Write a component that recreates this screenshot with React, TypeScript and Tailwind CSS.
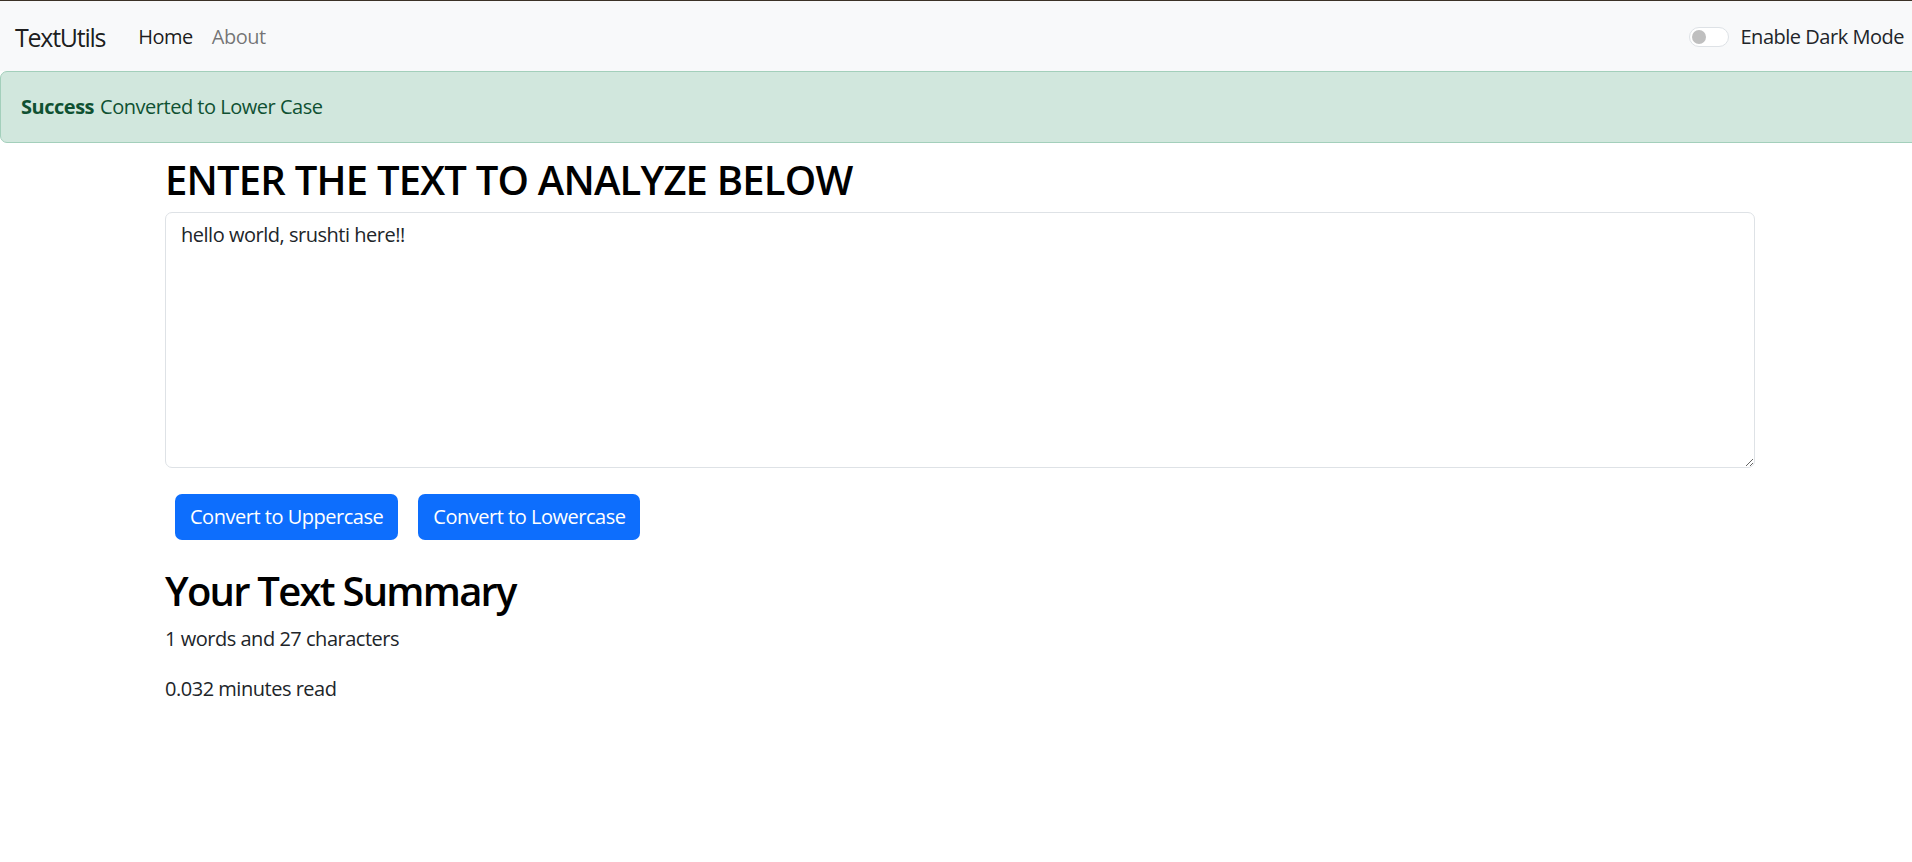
import React, { useState } from "react";

export default function App() {
  const [text, setText] = useState("hello world, srushti here!!");
  const words = 1;
  const chars = text.length;
  return (
    <div
      className="min-h-[862px] w-full overflow-hidden bg-white tracking-[-0.03em] text-[#212529]"
      style={{ fontFamily: '"Open Sans", "Noto Sans", sans-serif' }}
    >
      <div className="h-px w-full bg-[#3b3226]" />
      <nav className="flex h-[70px] items-center bg-[#f8f9fa] pt-[2px] pl-[15px] pr-[8px]">
        <span className="text-[25px] leading-none tracking-[-0.05em] text-black/90">TextUtils</span>
        <div className="ml-[33px] flex items-center gap-[19px] text-[20px]">
          <span className="text-black/90">Home</span>
          <span className="text-black/55">About</span>
        </div>
        <div className="ml-auto flex items-center">
          <div className="relative h-[20px] w-[40px] rounded-full border border-[#dee2e6] bg-white">
            <div className="absolute left-[2px] top-[2px] h-[14px] w-[14px] rounded-full bg-[#bfbfbf]" />
          </div>
          <span className="ml-[11px] text-[20px] text-[#212529]">Enable Dark Mode</span>
        </div>
      </nav>
      <div className="flex h-[72px] w-[1950px] items-center rounded-[7px] border border-[#a3cfbb] bg-[#d1e7dd] px-[20px] text-[20px] text-[#0f5132]">
        <strong className="font-bold">Success</strong>
        <span className="ml-[6px]">Converted to Lower Case</span>
      </div>
      <div className="ml-[165px] w-[1590px]">
        <h1 className="mt-[13px] mb-[8px] text-[40px] font-semibold leading-[48px] tracking-[-0.02em] text-black">
          ENTER THE TEXT TO ANALYZE BELOW
        </h1>
        <textarea
          className="block h-[256px] w-full rounded-[7px] border border-[#dee2e6] px-[15px] py-[7px] text-[20px] leading-[30px] text-[#212529] outline-none"
          value={text}
          onChange={(e) => setText(e.target.value)}
        />
        <div className="mt-[26px] flex gap-[20px] pl-[10px]">
          <button className="h-[46px] rounded-[7px] bg-[#0d6efd] px-[15px] text-[20px] text-white">
            Convert to Uppercase
          </button>
          <button className="h-[46px] rounded-[7px] bg-[#0d6efd] px-[15px] text-[20px] text-white">
            Convert to Lowercase
          </button>
        </div>
        <h2 className="mt-[27px] mb-[9px] text-[40px] font-semibold leading-[48px] tracking-[-0.044em] text-black">
          Your Text Summary
        </h2>
        <p className="mb-[20px] text-[20px] leading-[30px]">
          {words} words and {chars} characters
        </p>
        <p className="text-[20px] leading-[30px]">0.032 minutes read</p>
      </div>
    </div>
  );
}
